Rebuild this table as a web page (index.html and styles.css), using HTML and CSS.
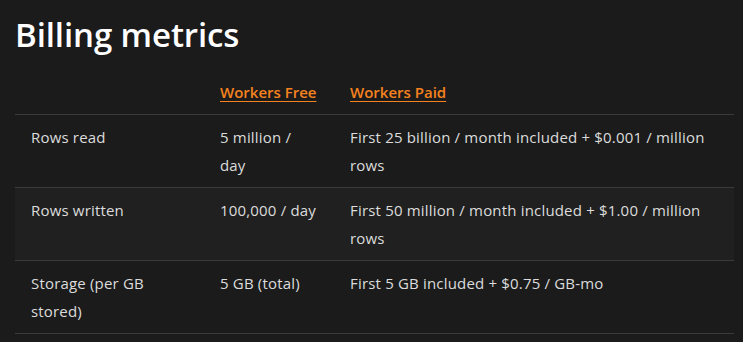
FILE: index.html
```html
<!DOCTYPE html>
<html lang="en">
<head>
<meta charset="utf-8">
<title>Billing metrics</title>
<link rel="stylesheet" href="styles.css">
</head>
<body>
<main class="page">
  <h2 class="title">Billing metrics</h2>
  <table class="pricing">
    <colgroup>
      <col class="c1">
      <col class="c2">
      <col class="c3">
    </colgroup>
    <thead>
      <tr>
        <th></th>
        <th><a href="#">Workers Free</a></th>
        <th><a href="#">Workers Paid</a></th>
      </tr>
    </thead>
    <tbody>
      <tr>
        <td>Rows read</td>
        <td>5 million / day</td>
        <td>First 25 billion / month included + $0.001 / million rows</td>
      </tr>
      <tr class="alt">
        <td>Rows written</td>
        <td>100,000 / day</td>
        <td>First 50 million / month included + $1.00 / million rows</td>
      </tr>
      <tr>
        <td>Storage (per GB stored)</td>
        <td>5 GB (total)</td>
        <td>First 5 GB included + $0.75 / GB-mo</td>
      </tr>
    </tbody>
  </table>
</main>
</body>
</html>
```

FILE: styles.css
```css
html, body {
  margin: 0;
  padding: 0;
  background: #1b1b1b;
}
.page {
  padding: 13px 9px 0 15px;
  font-family: "Open Sans", "Noto Sans", sans-serif;
  color: #dcdcdc;
}
.title {
  margin: 0 0 14px;
  font-size: 33px;
  line-height: 43px;
  font-weight: 600;
  color: #ffffff;
  letter-spacing: -0.1px;
}
.pricing {
  width: 719px;
  border-collapse: collapse;
  table-layout: fixed;
  font-size: 15px;
}
.c1 { width: 189px; }
.c2 { width: 130px; }
.c3 { width: 400px; }
.pricing th,
.pricing td {
  padding: 8px 16px;
  line-height: 28px;
  text-align: left;
  vertical-align: top;
}
.pricing td {
  letter-spacing: 0.18px;
}
.pricing th {
  font-weight: 600;
}
.pricing thead tr {
  border-bottom: 1px solid #3b3b3b;
}
.pricing tbody tr {
  border-bottom: 1px solid #3b3b3b;
}
.pricing tr.alt {
  background: #202020;
}
.pricing a {
  color: #f6821f;
  text-decoration: underline;
  text-underline-offset: 3px;
}
```
